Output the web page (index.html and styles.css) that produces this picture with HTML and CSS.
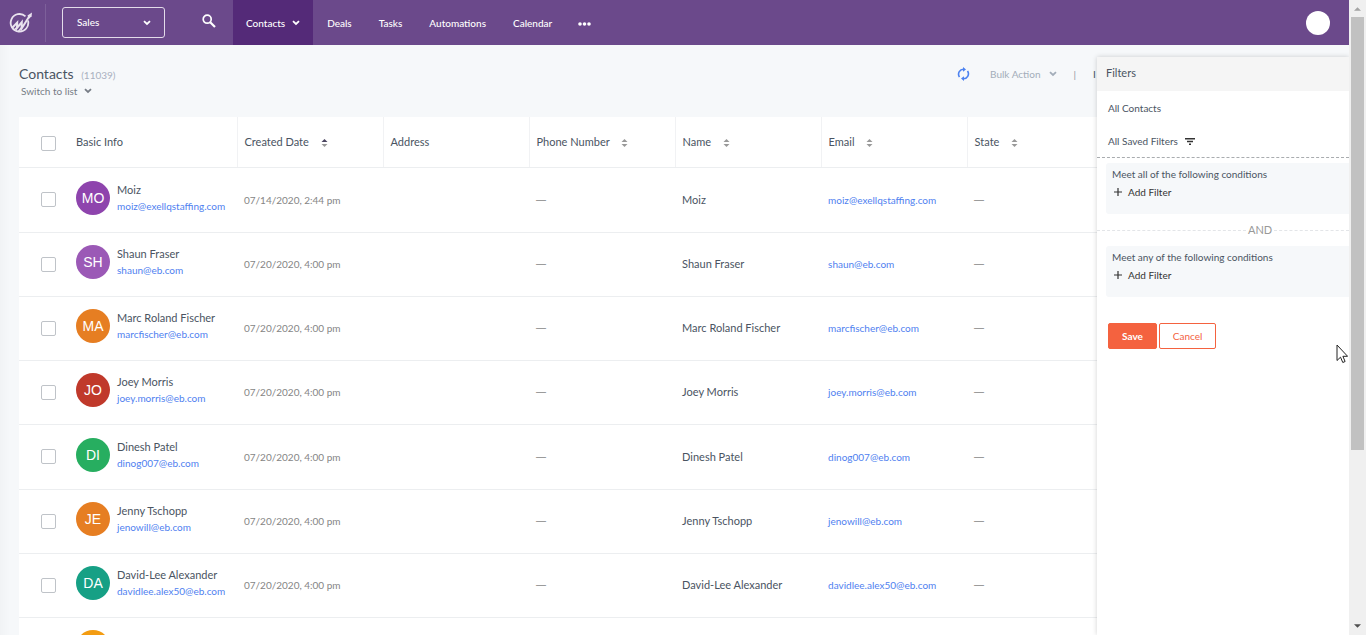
FILE: index.html
```html
<!DOCTYPE html>
<html lang="en">
<head>
<meta charset="utf-8">
<title>Contacts</title>
<link rel="stylesheet" href="styles.css">
</head>
<body>
<svg class="defs" aria-hidden="true">
  <symbol id="chevron" viewBox="0 0 8 6"><path d="M1 1.2 4 4 7 1.2" fill="none" stroke="currentColor" stroke-width="1.8"/></symbol>
  <symbol id="up" viewBox="0 0 8 4"><path d="M4 0 8 4H0z" fill="currentColor"/></symbol>
  <symbol id="down" viewBox="0 0 8 4"><path d="M0 0h8L4 4z" fill="currentColor"/></symbol>
  <symbol id="plus" viewBox="0 0 8 8"><path d="M4 0v8M0 4h8" stroke="currentColor" stroke-width="1.2"/></symbol>
</svg>
<div class="app">
  <header class="topbar">
    <a class="logo" href="#" aria-label="Home">
      <svg width="24" height="24" viewBox="0 0 24 24" fill="none" stroke="#e9e2ee">
        <path d="M16.500 5.400A8.800 8.800 0 1 0 19 9.600" stroke-width="1.8"/>
        <path d="M3 17 8.200 11.500 8 17 12.800 11.200 12.600 17.500 20.500 5" stroke-width="2"/>
        <path d="M5 19.200 8.500 15.800M9 20.800l3.500-4" stroke-width="1.600"/>
        <path d="M18.500 4.600 23 1.400 22.600 5.200 19.800 8z" fill="#e9e2ee" stroke="none"/>
      </svg>
    </a>
    <div class="picker">
      <select aria-label="Workspace"><option>Sales</option></select>
      <svg class="chev"><use href="#chevron"/></svg>
    </div>
    <button class="search" aria-label="Search">
      <svg width="14" height="14" viewBox="0 0 14 14" fill="none" stroke="#fff"><circle cx="5.2" cy="5.2" r="4" stroke-width="1.7"/><path d="M8.2 8.2 13 13" stroke-width="2.2"/></svg>
    </button>
    <nav class="nav">
      <a class="active" href="#">Contacts <svg class="chev"><use href="#chevron"/></svg></a>
      <a href="#">Deals</a>
      <a href="#">Tasks</a>
      <a href="#">Automations</a>
      <a href="#">Calendar</a>
      <button class="more" aria-label="More"><svg width="13" height="4" viewBox="0 0 13 4" fill="#fff"><circle cx="2" cy="2" r="1.8"/><circle cx="6.5" cy="2" r="1.8"/><circle cx="11" cy="2" r="1.8"/></svg></button>
    </nav>
    <button class="profile" aria-label="Profile"></button>
  </header>

  <div class="body">
    <main class="main">
      <div class="heading">
        <div>
          <h1>Contacts <span class="count">(11039)</span></h1>
          <button class="switch">Switch to list <svg class="chev"><use href="#chevron"/></svg></button>
        </div>
        <div class="tools">
          <button class="refresh" aria-label="Refresh">
            <svg width="13" height="14" viewBox="0 0 13 14" fill="none" stroke="#4c82f0" stroke-width="1.6"><path d="M2.5 10A4.9 4.9 0 0 1 7 2.3M10.5 4A4.9 4.9 0 0 1 6 11.7"/><path d="M6 0v4.8L9 2.4zM7 9.2V14L4 11.6z" fill="#4c82f0" stroke="none"/></svg>
          </button>
          <button class="bulk">Bulk Action <svg class="chev"><use href="#chevron"/></svg></button>
          <span class="bar">|</span>
          <span class="import">I</span>
        </div>
      </div>
      <table class="contacts">
        <thead>
          <tr>
            <th class="check"><input type="checkbox" aria-label="Select all"></th>
            <th class="basic">Basic Info</th>
            <th>Created Date <button class="sort asc" aria-label="Sort by created date"><svg><use href="#up"/></svg><svg><use href="#down"/></svg></button></th>
            <th>Address</th>
            <th>Phone Number <button class="sort" aria-label="Sort by phone number"><svg><use href="#up"/></svg><svg><use href="#down"/></svg></button></th>
            <th>Name <button class="sort" aria-label="Sort by name"><svg><use href="#up"/></svg><svg><use href="#down"/></svg></button></th>
            <th>Email <button class="sort" aria-label="Sort by email"><svg><use href="#up"/></svg><svg><use href="#down"/></svg></button></th>
            <th class="last">State <button class="sort" aria-label="Sort by state"><svg><use href="#up"/></svg><svg><use href="#down"/></svg></button></th>
          </tr>
        </thead>
        <tbody>
          <tr><td class="check"><input type="checkbox" aria-label="Select Moiz"></td><td><div class="person"><span class="avatar violet">MO</span><div><a class="name" href="#">Moiz</a><a class="mail" href="#">moiz@exellqstaffing.com</a></div></div></td><td class="date">07/14/2020, 2:44 pm</td><td></td><td class="dash">—</td><td>Moiz</td><td><a class="mail" href="#">moiz@exellqstaffing.com</a></td><td class="dash">—</td></tr>
          <tr><td class="check"><input type="checkbox" aria-label="Select Shaun Fraser"></td><td><div class="person"><span class="avatar purple">SH</span><div><a class="name" href="#">Shaun Fraser</a><a class="mail" href="#">shaun@eb.com</a></div></div></td><td class="date">07/20/2020, 4:00 pm</td><td></td><td class="dash">—</td><td>Shaun Fraser</td><td><a class="mail" href="#">shaun@eb.com</a></td><td class="dash">—</td></tr>
          <tr><td class="check"><input type="checkbox" aria-label="Select Marc Roland Fischer"></td><td><div class="person"><span class="avatar orange">MA</span><div><a class="name" href="#">Marc Roland Fischer</a><a class="mail" href="#">marcfischer@eb.com</a></div></div></td><td class="date">07/20/2020, 4:00 pm</td><td></td><td class="dash">—</td><td>Marc Roland Fischer</td><td><a class="mail" href="#">marcfischer@eb.com</a></td><td class="dash">—</td></tr>
          <tr><td class="check"><input type="checkbox" aria-label="Select Joey Morris"></td><td><div class="person"><span class="avatar red">JO</span><div><a class="name" href="#">Joey Morris</a><a class="mail" href="#">joey.morris@eb.com</a></div></div></td><td class="date">07/20/2020, 4:00 pm</td><td></td><td class="dash">—</td><td>Joey Morris</td><td><a class="mail" href="#">joey.morris@eb.com</a></td><td class="dash">—</td></tr>
          <tr><td class="check"><input type="checkbox" aria-label="Select Dinesh Patel"></td><td><div class="person"><span class="avatar green">DI</span><div><a class="name" href="#">Dinesh Patel</a><a class="mail" href="#">dinog007@eb.com</a></div></div></td><td class="date">07/20/2020, 4:00 pm</td><td></td><td class="dash">—</td><td>Dinesh Patel</td><td><a class="mail" href="#">dinog007@eb.com</a></td><td class="dash">—</td></tr>
          <tr><td class="check"><input type="checkbox" aria-label="Select Jenny Tschopp"></td><td><div class="person"><span class="avatar orange">JE</span><div><a class="name" href="#">Jenny Tschopp</a><a class="mail" href="#">jenowill@eb.com</a></div></div></td><td class="date">07/20/2020, 4:00 pm</td><td></td><td class="dash">—</td><td>Jenny Tschopp</td><td><a class="mail" href="#">jenowill@eb.com</a></td><td class="dash">—</td></tr>
          <tr><td class="check"><input type="checkbox" aria-label="Select David-Lee Alexander"></td><td><div class="person"><span class="avatar teal">DA</span><div><a class="name" href="#">David-Lee Alexander</a><a class="mail" href="#">davidlee.alex50@eb.com</a></div></div></td><td class="date">07/20/2020, 4:00 pm</td><td></td><td class="dash">—</td><td>David-Lee Alexander</td><td><a class="mail" href="#">davidlee.alex50@eb.com</a></td><td class="dash">—</td></tr>
          <tr><td></td><td><div class="person"><span class="avatar amber"></span></div></td><td></td><td></td><td></td><td></td><td></td><td></td></tr>
        </tbody>
      </table>
    </main>

    <aside class="filters">
      <h2>Filters</h2>
      <div class="saved">
        <a href="#">All Contacts</a>
        <button>All Saved Filters <svg width="10" height="7" viewBox="0 0 10 7" stroke="#333" stroke-width="1.6"><path d="M0 .8h10M2 3.5h6M4 6.2h2"/></svg></button>
      </div>
      <section class="group">
        <p>Meet all of the following conditions</p>
        <button><svg width="8" height="8"><use href="#plus"/></svg>Add Filter</button>
      </section>
      <div class="and"><span>AND</span></div>
      <section class="group">
        <p>Meet any of the following conditions</p>
        <button><svg width="8" height="8"><use href="#plus"/></svg>Add Filter</button>
      </section>
      <div class="actions">
        <button class="save">Save</button>
        <button class="cancel">Cancel</button>
      </div>
    </aside>
  </div>
</div>
<div class="scrollbar" aria-hidden="true">
  <svg class="arrow top"><use href="#up"/></svg>
  <div class="track"><div class="thumb"></div></div>
  <svg class="arrow"><use href="#down"/></svg>
</div>
<svg class="pointer" width="12" height="20" viewBox="0 0 12 20" aria-hidden="true"><path d="M1 1v15.500l3.500-3.300L6.800 18.500l2.300-1L6.900 12.300h4.700z" fill="#fff" stroke="#222"/></svg>
</body>
</html>
```
FILE: styles.css
```css
* { box-sizing: border-box; }
body {
  margin: 0;
  height: 100vh;
  display: flex;
  overflow: hidden;
  position: relative;
  font: 11px/16px Lato, "Liberation Sans", sans-serif;
  color: #4a5462;
  background: #f6f8fa;
}
button, select, input { font: inherit; color: inherit; margin: 0; }
button { background: none; border: 0; padding: 0; cursor: pointer; }
a { color: inherit; text-decoration: none; }
.defs { position: absolute; width: 0; height: 0; }
.chev { width: 8px; height: 6px; }
.app { flex: 1; min-width: 0; display: flex; flex-direction: column; }

.topbar {
  flex: none;
  height: 45px;
  display: flex;
  align-items: center;
  background: #6b498b;
  color: #fff;
  font-size: 10px;
  font-weight: 500;
}
.logo {
  display: flex;
  align-items: center;
  width: 46px;
  height: 38px;
  padding-left: 9px;
  border-right: 1px solid #7d609a;
}
.picker { position: relative; margin-left: 16px; }
.picker select {
  appearance: none;
  width: 103px;
  height: 31px;
  padding: 0 24px 2px 14px;
  border: 1px solid #e4dcea;
  border-radius: 3px;
  background: transparent;
  display: block;
}
.picker .chev { position: absolute; right: 14px; top: 13px; pointer-events: none; }
.search { display: flex; width: 68px; justify-content: center; padding: 0 0 3px 20px; }
.nav { display: flex; align-self: stretch; align-items: stretch; }
.nav a, .more { display: flex; align-items: center; padding: 0 13px; }
.nav a:not(.active) { padding: 0 13px 0 14px; }
.nav .active { background: #542a78; gap: 7px; }
.more { padding-top: 3px; }
.profile {
  width: 24px;
  height: 24px;
  margin: 0 19px 0 auto;
  border-radius: 50%;
  background: #fff;
}

.body { flex: 1; min-height: 0; position: relative; overflow: hidden; }
.main {
  height: 100%;
  padding-left: 19px;
  overflow: hidden;
  background: linear-gradient(90deg, #f1f3f5, #f6f8fa 10px);
}
.heading {
  height: 72px;
  padding: 20px 252px 0 0;
  display: flex;
  justify-content: space-between;
}
h1 { margin: 0; font-size: 14px; line-height: 18px; font-weight: 400; }
.count { margin-left: 4px; font-size: 10px; color: #a9b0c0; }
.switch { display: flex; align-items: center; gap: 7px; margin-left: 2px; font-size: 10px; line-height: 14px; color: #777d86; }
.tools { display: flex; align-items: center; height: 18px; font-size: 10px; color: #a3adb9; }
.refresh { display: flex; margin-right: 20px; }
.bulk { display: flex; align-items: center; gap: 9px; margin-right: 16px; }
.bar { color: #8d96a1; margin-right: 17px; }
.import { color: #4a5462; width: 4px; }

.contacts {
  width: calc(100% - 2px);
  table-layout: fixed;
  border-collapse: collapse;
  background: #fff;
}
th, td { padding: 0 8px 0 7px; text-align: left; font-weight: 400; border-bottom: 1px solid #eceef0; white-space: nowrap; }
th { height: 50px; border-right: 1px solid #f1f2f4; }
th:nth-child(n+3) { width: 11%; }
th.check { width: 57px; border-right: 0; }
th.basic { width: 161px; }
th.basic, td:nth-child(2) { padding-left: 0; }
th.last { width: auto; }
.check { padding: 0 0 0 22px; }
th.check { padding-top: 3px; }
td { height: 64px; }
tbody tr:nth-child(4n+1) td { height: 65px; }
input[type="checkbox"] {
  appearance: none;
  display: block;
  width: 15px;
  height: 15px;
  border: 1px solid #bfc3c8;
  border-radius: 2px;
  background: #fff;
}
.sort { display: inline-flex; flex-direction: column; gap: 2px; margin-left: 9px; color: #999; vertical-align: middle; }
.sort svg { width: 7px; height: 3px; }
.asc svg:first-child { color: #4b4560; }
.person { display: flex; align-items: center; gap: 7px; padding-bottom: 4px; }
.avatar {
  flex: none;
  width: 34px;
  height: 34px;
  border-radius: 50%;
  color: #fff;
  font: 14px/34px "Liberation Sans", Arial, sans-serif;
  text-align: center;
}
.violet { background: #8e44ad; }
.purple { background: #9b59b6; }
.orange { background: #e67e22; }
.red { background: #c0392b; }
.green { background: #27ae60; }
.teal { background: #16a085; }
.amber { background: #f39c12; }
.person a { display: block; }
.mail { font-size: 10px; color: #4f7ff0; }
.date { font-size: 10px; color: #858585; }
.dash { font-family: "Liberation Sans", sans-serif; font-size: 10px; color: #858585; }

.filters {
  position: absolute;
  top: 12px;
  right: 0;
  bottom: 0;
  width: 252px;
  background: #fff;
  box-shadow: 0 0 5px rgba(0, 0, 0, .18);
  font-size: 10px;
}
h2 { margin: 0; height: 34px; padding-left: 9px; font-size: 11px; line-height: 32px; font-weight: 400; background: #f5f5f5; }
.saved {
  display: flex;
  flex-direction: column;
  align-items: flex-start;
  gap: 17px;
  padding: 9px 11px 8px;
  border-bottom: 1px dashed #a9acaf;
}
.saved button { display: flex; align-items: center; gap: 7px; }
.group { height: 51px; margin: 5px 0 0 9px; padding: 3px 6px; border-radius: 3px 0 0 3px; background: #f6f8fa; }
.group p { margin: 0 0 2px; }
.group button { display: flex; align-items: center; gap: 6px; padding-left: 2px; color: #333; }
.and { display: flex; align-items: center; gap: 2px; height: 32px; color: #999; font-size: 11px; }
.and::before, .and::after { content: ""; border-top: 1px dashed #e3e5e8; }
.and::before { width: 149px; }
.and::after { flex: 1; }
.and + .group { margin-top: 0; }
.actions { display: flex; gap: 2px; padding: 26px 11px; }
.actions button { height: 26px; border: 1px solid #f4623f; border-radius: 2px; padding: 0 13px; }
.actions .save { background: #f4623f; color: #fff; font-weight: 700; }
.actions .cancel { color: #f4623f; background: #fff; }

.scrollbar {
  flex: none;
  width: 17px;
  display: flex;
  flex-direction: column;
  align-items: center;
  background: #f0f0f0;
  color: #505050;
}
.arrow { flex: none; width: 7px; height: 4px; margin: 6px 0 7px; }
.arrow.top { color: #a3a3a3; margin: 7px 0 6px; }
.track { flex: 1; width: 13px; }
.thumb { height: 72%; background: #c1c1c1; }
.pointer { position: absolute; right: 18px; top: 344px; }
```
